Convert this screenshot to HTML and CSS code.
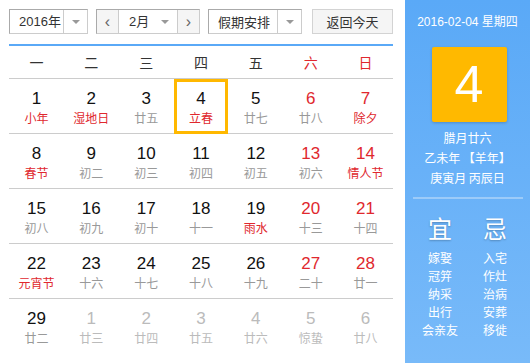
FILE: index.html
```html
<!DOCTYPE html>
<html lang="zh-CN">
<head>
    <meta charset="UTF-8">
    <title>万年历</title>
    <link rel="stylesheet" href="styles.css">
</head>
<body>
    <div class="calendar">
        <div class="main">
            <div class="toolbar">
                <div class="select year">
                    <span class="label">2016年</span>
                    <span class="drop"><i class="tri"></i></span>
                </div>
                <div class="select month">
                    <span class="nav">&lsaquo;</span>
                    <span class="label">2月</span>
                    <span class="tri-wrap"><i class="tri"></i></span>
                    <span class="nav">&rsaquo;</span>
                </div>
                <div class="select holiday">
                    <span class="label">假期安排</span>
                    <span class="drop"><i class="tri"></i></span>
                </div>
                <button class="today-btn">返回今天</button>
            </div>

            <div class="weekdays">
                <span>一</span><span>二</span><span>三</span><span>四</span><span>五</span><span class="red">六</span><span class="red">日</span>
            </div>

            <div class="days" id="days"></div>
        </div>

        <div class="side">
            <div class="side-date">2016-02-04 星期四</div>
            <div class="big-day">4</div>
            <div class="lunar">
                <p>腊月廿六</p>
                <p>乙未年 【羊年】</p>
                <p>庚寅月 丙辰日</p>
            </div>
            <div class="almanac">
                <div class="col">
                    <h3>宜</h3>
                    <p>嫁娶</p><p>冠笄</p><p>纳采</p><p>出行</p><p>会亲友</p>
                </div>
                <div class="col">
                    <h3>忌</h3>
                    <p>入宅</p><p>作灶</p><p>治病</p><p>安葬</p><p>移徙</p>
                </div>
            </div>
        </div>
    </div>

    <script>
        // [day, lunar, dayRed, lunarRed, other month, today]
        const days = [
            [1, '小年', 0, 1], [2, '湿地日', 0, 1], [3, '廿五'], [4, '立春', 0, 1, 0, 1], [5, '廿七'], [6, '廿八', 1], [7, '除夕', 1, 1],
            [8, '春节', 0, 1], [9, '初二'], [10, '初三'], [11, '初四'], [12, '初五'], [13, '初六', 1], [14, '情人节', 1, 1],
            [15, '初八'], [16, '初九'], [17, '初十'], [18, '十一'], [19, '雨水', 0, 1], [20, '十三', 1], [21, '十四', 1],
            [22, '元宵节', 0, 1], [23, '十六'], [24, '十七'], [25, '十八'], [26, '十九'], [27, '二十', 1], [28, '廿一', 1],
            [29, '廿二'], [1, '廿三', 0, 0, 1], [2, '廿四', 0, 0, 1], [3, '廿五', 0, 0, 1], [4, '廿六', 0, 0, 1], [5, '惊蛰', 0, 0, 1], [6, '廿八', 0, 0, 1]
        ];

        const grid = document.getElementById('days');
        days.forEach(d => {
            const cell = document.createElement('div');
            cell.className = 'day';
            if (d[4]) cell.classList.add('other');
            if (d[5]) cell.classList.add('today');
            cell.innerHTML = `<span class="num${d[2] ? ' red' : ''}">${d[0]}</span>` +
                `<span class="lun${d[3] ? ' red' : ''}">${d[1]}</span>`;
            grid.appendChild(cell);
        });
    </script>
</body>
</html>
```

FILE: styles.css
```css
body {
    margin: 0;
    font-family: "Noto Sans CJK SC", "Liberation Sans", sans-serif;
    background: #fff;
    color: #333;
}

.calendar {
    display: flex;
    width: 530px;
    height: 363px;
}

.main {
    width: 384px;
    padding: 9px 12px 0 9px;
}

/* toolbar */
.toolbar {
    display: flex;
    height: 25px;
    font-size: 13px;
}

.select {
    display: flex;
    align-items: stretch;
    border: 1px solid #aaa;
    border-right-color: #ccc;
    border-bottom-color: #ccc;
    box-sizing: border-box;
    height: 25px;
    background: #fff;
}

.select .label {
    display: flex;
    align-items: center;
    padding-left: 9px;
    line-height: 1;
}

.drop {
    display: flex;
    align-items: center;
    justify-content: center;
    border-left: 1px solid #ccc;
    width: 23px;
}

.tri {
    width: 0;
    height: 0;
    border-left: 4px solid transparent;
    border-right: 4px solid transparent;
    border-top: 4px solid #999;
}

.year {
    width: 79px;
    justify-content: space-between;
}

.year .label {
    font-family: "Liberation Sans", "Noto Sans CJK SC", sans-serif;
}

.month {
    width: 104px;
    margin-left: 8px;
}

.month .nav {
    width: 21px;
    display: flex;
    align-items: center;
    justify-content: center;
    background: #f5f5f5;
    color: #666;
    font-family: "Liberation Sans", sans-serif;
    font-size: 16px;
}

.month .nav:first-child {
    border-right: 1px solid #ccc;
}

.month .nav:last-child {
    border-left: 1px solid #ccc;
}

.month .label {
    padding-left: 10px;
    flex: 1;
    font-family: "Liberation Sans", "Noto Sans CJK SC", sans-serif;
}

.tri-wrap {
    display: flex;
    align-items: center;
    padding-right: 8px;
}

.holiday {
    width: 94px;
    margin-left: 8px;
    justify-content: space-between;
}

.holiday .label {
    padding-left: 9px;
}

.today-btn {
    margin-left: 10px;
    width: 81px;
    height: 25px;
    border: 1px solid #d3d3d3;
    background: #f5f5f5;
    font-family: "Noto Sans CJK SC", sans-serif;
    font-size: 13px;
    color: #333;
    padding: 0;
}

/* weekday header */
.weekdays {
    display: grid;
    grid-template-columns: repeat(7, 1fr);
    margin-top: 10px;
    border-top: 2px solid #5aa9f7;
    border-bottom: 1px solid #ccc;
    height: 32px;
    align-items: center;
    text-align: center;
    font-size: 14px;
    color: #333;
}

.red {
    color: #e0282e !important;
}

/* day grid */
.days {
    display: grid;
    grid-template-columns: repeat(7, 1fr);
}

.day {
    height: 54px;
    padding-top: 2px;
    box-sizing: border-box;
    height: 55px;
    border-bottom: 1px solid #ccc;
    display: flex;
    flex-direction: column;
    align-items: center;
    justify-content: center;
}

.day:nth-last-child(-n+7) {
    border-bottom: none;
}

.day .num {
    font-family: "Liberation Sans", sans-serif;
    font-size: 17px;
    color: #111;
    line-height: 19px;
}

.day .lun {
    font-size: 12px;
    color: #999;
    line-height: 17px;
    margin-top: 1px;
}

.day.other .num,
.day.other .lun {
    color: #bbb;
}

.day.today {
    border: 3px solid #ffb800;
}

/* side panel */
.side {
    width: 125px;
    background: linear-gradient(to bottom, #5aa9f7, #78baf9);
    color: #fff;
    display: flex;
    flex-direction: column;
    align-items: center;
}

.side-date {
    margin-top: 13px;
    font-size: 12px;
    line-height: 18px;
    font-family: "Liberation Sans", "Noto Sans CJK SC", sans-serif;
}

.big-day {
    margin-top: 16px;
    margin-left: 3px;
    width: 75px;
    height: 75px;
    background: #ffb900;
    border-radius: 2px;
    box-shadow: 0 1px 3px rgba(0, 0, 0, 0.2);
    font-family: "Liberation Sans", sans-serif;
    font-size: 52px;
    line-height: 75px;
    text-align: center;
}

.lunar {
    margin-top: 6px;
    text-align: center;
    font-size: 12px;
    width: 110px;
    border-bottom: 2px solid #9ccbf9;
    padding-bottom: 9px;
}

.lunar p {
    margin: 0;
    line-height: 20px;
}

.almanac {
    display: flex;
    width: 110px;
    justify-content: space-between;
}

.almanac .col {
    width: 55px;
    text-align: center;
}

.almanac h3 {
    margin: 14px 0 6px;
    font-size: 24px;
    font-weight: normal;
    line-height: 30px;
    text-shadow: 0 1px 2px rgba(0, 0, 0, 0.25);
}

.almanac p {
    margin: 0;
    font-size: 12px;
    line-height: 18px;
}
```
